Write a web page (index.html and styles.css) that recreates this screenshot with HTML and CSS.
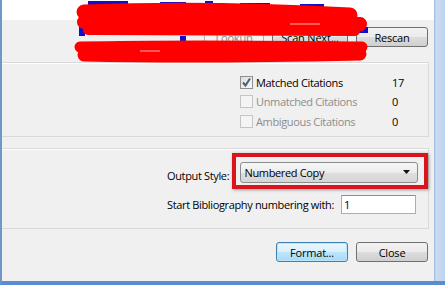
FILE: index.html
```html
<!DOCTYPE html>
<html lang="en">
<head>
    <meta charset="UTF-8">
    <title>Format Bibliography</title>
    <link rel="stylesheet" href="styles.css">
</head>
<body>
    <div class="frame">
        <div class="window">
            <div class="top-strip"></div>
            <div class="toolbar">
                <button class="btn btn-disabled btn-lookup">Lookup</button>
                <button class="btn btn-scan">Scan Next...</button>
                <button class="btn btn-rescan">Rescan</button>
            </div>

            <div class="panel panel-counts">
                <div class="count-row">
                    <span class="check checked">
                        <svg width="11" height="11" viewBox="0 0 11 11"><path d="M2 5.5 L4.5 8.5 L9 1.5" fill="none" stroke="#4a5f80" stroke-width="2"/></svg>
                    </span>
                    <span class="count-label">Matched Citations</span>
                    <span class="count-num">17</span>
                </div>
                <div class="count-row disabled">
                    <span class="check"></span>
                    <span class="count-label">Unmatched Citations</span>
                    <span class="count-num">0</span>
                </div>
                <div class="count-row disabled">
                    <span class="check"></span>
                    <span class="count-label">Ambiguous Citations</span>
                    <span class="count-num">0</span>
                </div>
            </div>

            <div class="panel panel-style">
                <div class="style-row">
                    <span class="field-label">Output Style:</span>
                    <div class="highlight">
                        <div class="combo">
                            <span>Numbered Copy</span>
                            <svg width="8" height="5" viewBox="0 0 8 5"><path d="M0 0 H7 L3.5 4 Z" fill="#111"/></svg>
                        </div>
                    </div>
                </div>
                <div class="start-row">
                    <span class="field-label">Start Bibliography numbering with:</span>
                    <div class="num-input">1</div>
                </div>
            </div>

            <div class="actions">
                <button class="btn btn-default">Format...</button>
                <button class="btn">Close</button>
            </div>
        </div>
    </div>

    <!-- redaction scribble over the header -->
    <svg class="scribble" width="445" height="70" viewBox="0 0 445 70">
        <g fill="#1010c8">
            <rect x="88" y="1" width="40" height="6"/>
            <rect x="160" y="2" width="26" height="5"/>
            <rect x="205" y="1" width="8" height="8"/>
            <rect x="240" y="3" width="30" height="4"/>
            <rect x="300" y="4" width="24" height="4"/>
            <rect x="79" y="24" width="6" height="12"/>
            <rect x="352" y="27" width="16" height="6"/>
            <rect x="180" y="36" width="6" height="7"/>
        </g>
        <g fill="none" stroke="#ff0000" stroke-linecap="round">
            <path d="M84 12 C160 9 260 10 350 15" stroke-width="15"/>
            <path d="M84 22 C170 20 280 21 360 24" stroke-width="14"/>
            <path d="M88 30 C170 31 260 30 355 31" stroke-width="10"/>
            <path d="M80 47 C170 45 280 46 362 47" stroke-width="11"/>
            <path d="M84 55 C170 57 270 56 360 54" stroke-width="13"/>
        </g>
        <g fill="none" stroke="#fff" stroke-width="1" opacity="0.7">
            <path d="M140 51 H160"/>
            <path d="M290 24 H320"/>
        </g>
    </svg>
</body>
</html>
```

FILE: styles.css
```css
* {
    margin: 0;
    padding: 0;
    box-sizing: border-box;
}
body {
    width: 445px;
    height: 285px;
    overflow: hidden;
    background: #f0f0f0;
    font-family: "Open Sans", "Noto Sans", sans-serif;
    font-size: 11px;
    letter-spacing: -0.35px;
    color: #000;
    position: relative;
}
.frame {
    height: 285px;
    display: flex;
    border-left: 2px solid #6f98c9;
    border-bottom: 4px solid #5a8cd2;
    background: linear-gradient(to right, #f0f0f0 0, #f0f0f0 432px, #9bb6d8 432px, #c9dcf2 434px, #bcd2ee 445px);
}
.window {
    width: 432px;
    display: flex;
    flex-direction: column;
}
.top-strip {
    height: 20px;
    background: #fff;
}
.toolbar {
    height: 42px;
    display: flex;
    justify-content: flex-end;
    align-items: flex-start;
    gap: 8px;
    padding: 7px 6px 0 0;
}
.btn {
    height: 20px;
    min-width: 72px;
    border: 1px solid #707070;
    border-radius: 3px;
    background: linear-gradient(to bottom, #f2f2f2 0, #ebebeb 50%, #dddddd 50%, #cfcfcf 100%);
    font-family: inherit;
    font-size: 11px;
    letter-spacing: -0.2px;
    color: #000;
    padding: 0 8px;
}
.btn-disabled {
    border-color: #adb2b5;
    background: #f4f4f4;
    color: #8a8a8a;
}
.btn-lookup {
    min-width: 60px;
}
.btn-scan {
    min-width: 76px;
}
.btn-default {
    border-color: #3c7fb1;
    background: linear-gradient(to bottom, #eaf6fd 0, #d9f0fc 50%, #bee6fd 50%, #a7d9f5 100%);
    box-shadow: inset 0 0 0 1px #bde6fc;
}
.panel {
    width: 427px;
    border: 1px solid #d9d9d9;
    border-left: none;
    background: #f0f0f0;
    box-shadow: inset 0 1px 0 #fff;
}
.panel-counts {
    height: 75px;
    padding: 12px 0 0 238px;
    display: flex;
    flex-direction: column;
    gap: 5.5px;
}
.count-row {
    display: flex;
    align-items: center;
    height: 14px;
}
.check {
    width: 13px;
    height: 13px;
    border: 1px solid #8e8f8f;
    background: linear-gradient(135deg, #dcdcdc, #fbfbfb);
    display: flex;
    align-items: center;
    justify-content: center;
    margin-right: 3px;
}
.count-row.disabled .check {
    border-color: #c5c5c5;
    background: #f4f4f4;
}
.count-label {
    width: 136px;
}
.count-row.disabled .count-label {
    color: #8d8d8d;
}
.count-num {
    width: 20px;
}
.panel-style {
    margin-top: 11px;
    height: 81px;
    padding: 4px 0 0 165px;
}
.style-row {
    display: flex;
    align-items: center;
}
.field-label {
    white-space: nowrap;
}
.style-row .field-label {
    width: 66px;
    margin-top: 8px;
}
.highlight {
    width: 197px;
    height: 36px;
    border: 4px solid #d9141c;
    box-shadow: 1px 1px 3px rgba(0, 0, 0, 0.35);
    padding: 5px 6px 0 4px;
}
.combo {
    height: 21px;
    border: 1px solid #8c8c8c;
    border-radius: 3px;
    background: linear-gradient(to bottom, #f7f7f7 0, #ececec 50%, #dedede 51%, #d6d6d6 100%);
    display: flex;
    align-items: center;
    justify-content: space-between;
    padding: 0 6px 0 3px;
}
.start-row {
    display: flex;
    align-items: center;
    gap: 7px;
    margin-top: 6px;
}
.num-input {
    width: 75px;
    height: 19px;
    border: 1px solid #abadb3;
    border-top-color: #8b8d93;
    background: #fff;
    padding: 1px 2px;
    line-height: 15px;
}
.actions {
    flex: 1;
    display: flex;
    justify-content: flex-end;
    align-items: flex-start;
    gap: 8px;
    padding: 13px 6px 0 0;
}
.actions .btn {
    width: 72px;
}
.scribble {
    position: absolute;
    left: 0;
    top: 0;
    pointer-events: none;
}
```
